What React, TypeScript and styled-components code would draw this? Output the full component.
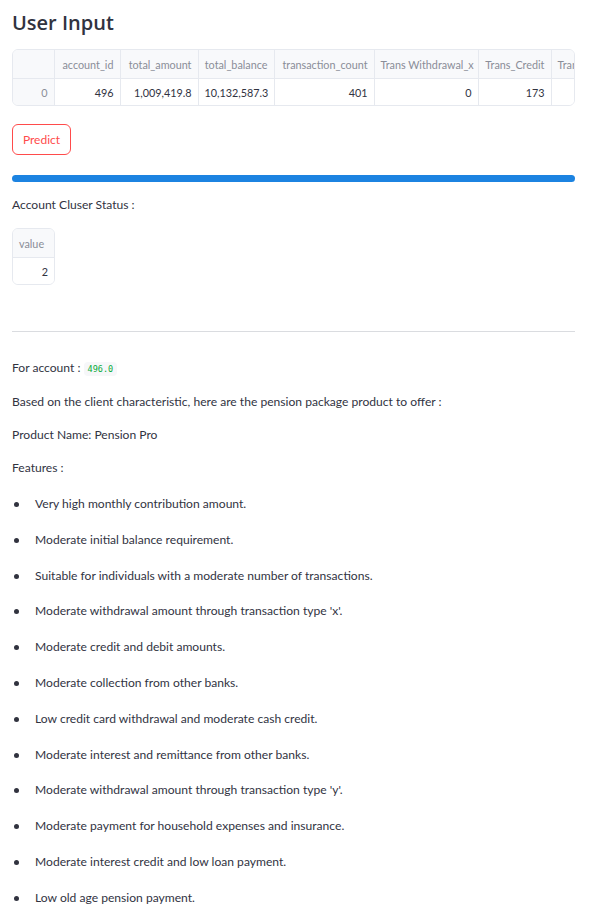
import React from "react";
import styled, { createGlobalStyle } from "styled-components";

const GlobalStyle = createGlobalStyle`
  html, body {
    margin: 0;
    padding: 0;
    background: #ffffff;
  }
  body {
    font-family: Lato, "Liberation Sans", sans-serif;
    color: #31333f;
  }
`;

const columns = [
  { name: "", width: 41 },
  { name: "account_id", width: 66 },
  { name: "total_amount", width: 78 },
  { name: "total_balance", width: 76 },
  { name: "transaction_count", width: 100 },
  { name: "Trans Withdrawal_x", width: 104 },
  { name: "Trans_Credit", width: 73 },
  { name: "Trans_Debit", width: 70 },
];

const row = ["0", "496", "1,009,419.8", "10,132,587.3", "401", "0", "173", "228"];

const features = [
  "Very high monthly contribution amount.",
  "Moderate initial balance requirement.",
  "Suitable for individuals with a moderate number of transactions.",
  "Moderate withdrawal amount through transaction type 'x'.",
  "Moderate credit and debit amounts.",
  "Moderate collection from other banks.",
  "Low credit card withdrawal and moderate cash credit.",
  "Moderate interest and remittance from other banks.",
  "Moderate withdrawal amount through transaction type 'y'.",
  "Moderate payment for household expenses and insurance.",
  "Moderate interest credit and low loan payment.",
  "Low old age pension payment.",
];

const tableWidth = columns.reduce((sum, c) => sum + c.width, 0);

export default function App(): JSX.Element {
  return (
    <>
      <GlobalStyle />
      <Page>
        <Title>User Input</Title>
        <TableFrame>
          <Table style={{ width: tableWidth }}>
            <colgroup>
              {columns.map((c, i) => (
                <col key={i} style={{ width: c.width }} />
              ))}
            </colgroup>
            <thead>
              <tr>
                {columns.map((c, i) => (
                  <HeadCell key={i}>{c.name}</HeadCell>
                ))}
              </tr>
            </thead>
            <tbody>
              <tr>
                {row.map((v, i) => (
                  <BodyCell key={i} index={i === 0}>
                    {v}
                  </BodyCell>
                ))}
              </tr>
            </tbody>
          </Table>
        </TableFrame>

        <PredictButton>Predict</PredictButton>

        <Progress>
          <ProgressFill />
        </Progress>

        <StatusLabel>Account Cluser Status :</StatusLabel>

        <SmallTableFrame>
          <Table style={{ width: 41 }}>
            <thead>
              <tr>
                <HeadCell>value</HeadCell>
              </tr>
            </thead>
            <tbody>
              <tr>
                <BodyCell index={false}>2</BodyCell>
              </tr>
            </tbody>
          </Table>
        </SmallTableFrame>

        <Divider />

        <Text>
          For account : <Code>496.0</Code>
        </Text>
        <Text>
          Based on the client characteristic, here are the pension package
          product to offer :
        </Text>
        <Text>Product Name: Pension Pro</Text>
        <Text>Features :</Text>

        <FeatureList>
          {features.map((f) => (
            <Feature key={f}>{f}</Feature>
          ))}
        </FeatureList>
      </Page>
    </>
  );
}

const Page = styled.div`
  padding: 0 16px 0 12px;
  display: flex;
  flex-direction: column;
`;

const Title = styled.h1`
  margin: 10px 0 0;
  font-family: "Open Sans", "Noto Sans", sans-serif;
  font-size: 20px;
  font-weight: 600;
  line-height: 26px;
  color: #31333f;
`;

const TableFrame = styled.div`
  margin-top: 13px;
  border: 1px solid #e6e9ef;
  border-radius: 6px;
  overflow: hidden;
  width: 561px;
`;

const SmallTableFrame = styled(TableFrame)`
  margin-top: 15px;
  width: 41px;
`;

const Table = styled.table`
  border-collapse: collapse;
  table-layout: fixed;
  font-size: 10.8px;
`;

const HeadCell = styled.th`
  height: 28px;
  padding: 0 6px;
  background: #f8f9fb;
  color: #8a8d98;
  font-weight: 400;
  text-align: right;
  white-space: nowrap;
  overflow: hidden;
  text-overflow: clip;
  border-right: 1px solid #e6e9ef;
  border-bottom: 1px solid #e6e9ef;
  &:last-child {
    border-right: none;
    text-align: left;
  }
`;

const BodyCell = styled.td<{ index: boolean }>`
  height: 26px;
  padding: 0 6px;
  color: ${({ index }) => (index ? "#8a8d98" : "#31333f")};
  background: ${({ index }) => (index ? "#f8f9fb" : "#ffffff")};
  text-align: right;
  white-space: nowrap;
  overflow: hidden;
  border-right: 1px solid #e6e9ef;
  &:last-child {
    border-right: none;
  }
`;

const PredictButton = styled.button`
  align-self: flex-start;
  margin-top: 18px;
  height: 31px;
  width: 59px;
  padding: 0;
  border: 1px solid #ff4b4b;
  border-radius: 6px;
  background: #ffffff;
  color: #ff4b4b;
  font-family: Lato, sans-serif;
  font-size: 12px;
`;

const Progress = styled.div`
  margin-top: 20px;
  height: 7px;
  border-radius: 4px;
  background: #f0f2f6;
  overflow: hidden;
`;

const ProgressFill = styled.div`
  height: 100%;
  width: 100%;
  background: #1c83e1;
`;

const Text = styled.p`
  margin: 17px 0 0;
  font-size: 12.1px;
  line-height: 16px;
  color: #31333f;
`;

const StatusLabel = styled(Text)`
  margin-top: 15px;
`;

const Code = styled.code`
  font-family: "DejaVu Sans Mono", monospace;
  font-size: 8.5px;
  color: #09ab3b;
  background: #f6f7f9;
  padding: 2px 4px;
  border-radius: 4px;
`;

const Divider = styled.hr`
  margin: 46px 0 11px;
  border: none;
  border-top: 1px solid #dadce0;
`;

const FeatureList = styled.ul`
  margin: 20px 0 0;
  padding: 0;
  list-style: none;
`;

const Feature = styled.li`
  position: relative;
  padding-left: 23px;
  font-size: 12.1px;
  line-height: 16px;
  margin-bottom: 19.8px;
  &::before {
    content: "";
    position: absolute;
    left: 2px;
    top: 6px;
    width: 5px;
    height: 5px;
    border-radius: 50%;
    background: #31333f;
  }
`;
